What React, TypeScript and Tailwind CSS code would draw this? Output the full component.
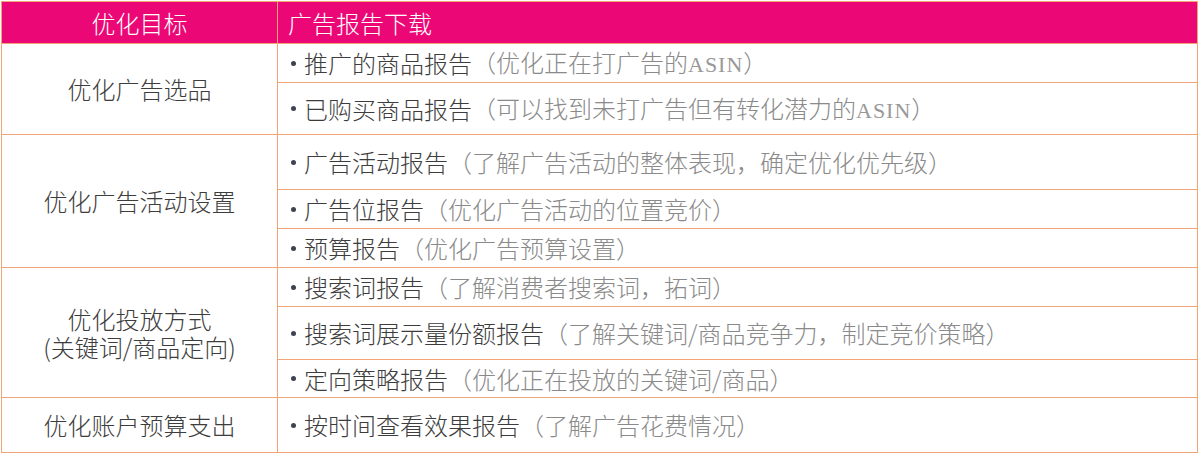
import React from "react";

type Item = { main: string; note: string; h: number };
type Group = { goal: string[]; items: Item[] };

const groups: Group[] = [
  {
    goal: ["优化广告选品"],
    items: [
      { main: "推广的商品报告", note: "（优化正在打广告的ASIN）", h: 39 },
      { main: "已购买商品报告", note: "（可以找到未打广告但有转化潜力的ASIN）", h: 52 },
    ],
  },
  {
    goal: ["优化广告活动设置"],
    items: [
      { main: "广告活动报告", note: "（了解广告活动的整体表现，确定优化优先级）", h: 55 },
      { main: "广告位报告", note: "（优化广告活动的位置竞价）", h: 39 },
      { main: "预算报告", note: "（优化广告预算设置）", h: 39 },
    ],
  },
  {
    goal: ["优化投放方式", "(关键词/商品定向)"],
    items: [
      { main: "搜索词报告", note: "（了解消费者搜索词，拓词）", h: 39 },
      { main: "搜索词展示量份额报告", note: "（了解关键词/商品竞争力，制定竞价策略）", h: 53 },
      { main: "定向策略报告", note: "（优化正在投放的关键词/商品）", h: 38 },
    ],
  },
  {
    goal: ["优化账户预算支出"],
    items: [{ main: "按时间查看效果报告", note: "（了解广告花费情况）", h: 55 }],
  },
];

// "ASIN" is set in a narrow serif in the source, keep it half-width
function Note({ text }: { text: string }) {
  const parts = text.split("ASIN");
  return (
    <span className="text-[#8a8a8a]">
      {parts.map((p, i) => (
        <React.Fragment key={i}>
          {i > 0 && (
            <span className="font-['Liberation_Serif',serif] text-[22px] tracking-[1px] text-[#999]">ASIN</span>
          )}
          {p}
        </React.Fragment>
      ))}
    </span>
  );
}

export default function App() {
  return (
    <div className="w-[1200px] h-[453px] bg-white pl-px pt-px font-['Noto_Sans_CJK_SC','Noto_Sans',sans-serif]">
      <table className="w-[1197px] border-collapse table-fixed text-[24px] leading-none">
        <colgroup>
          <col className="w-[276px]" />
          <col />
        </colgroup>
        <thead>
          <tr className="h-[42px] bg-[#ec0776] text-white">
            <th className="border border-[#f3a476] font-light text-center">优化目标</th>
            <th className="border border-[#f3a476] font-light text-left pl-[10px]">广告报告下载</th>
          </tr>
        </thead>
        <tbody>
          {groups.map((g) =>
            g.items.map((it, i) => (
              <tr key={it.main} style={{ height: it.h }}>
                {i === 0 && (
                  <td
                    rowSpan={g.items.length}
                    className="border border-[#f3a476] text-center text-[#3d3d3d] font-light leading-[28px]"
                  >
                    {g.goal.map((l) => (
                      <div key={l}>{l}</div>
                    ))}
                  </td>
                )}
                <td className="border border-[#f3a476] pl-[13px] font-light">
                  <div className="flex items-center">
                    <span className="w-[5px] h-[5px] rounded-full bg-[#3d4450] mr-[8px] shrink-0" />
                    <span className="text-[#3d3d3d]">{it.main}</span>
                    <Note text={it.note} />
                  </div>
                </td>
              </tr>
            ))
          )}
        </tbody>
      </table>
    </div>
  );
}
